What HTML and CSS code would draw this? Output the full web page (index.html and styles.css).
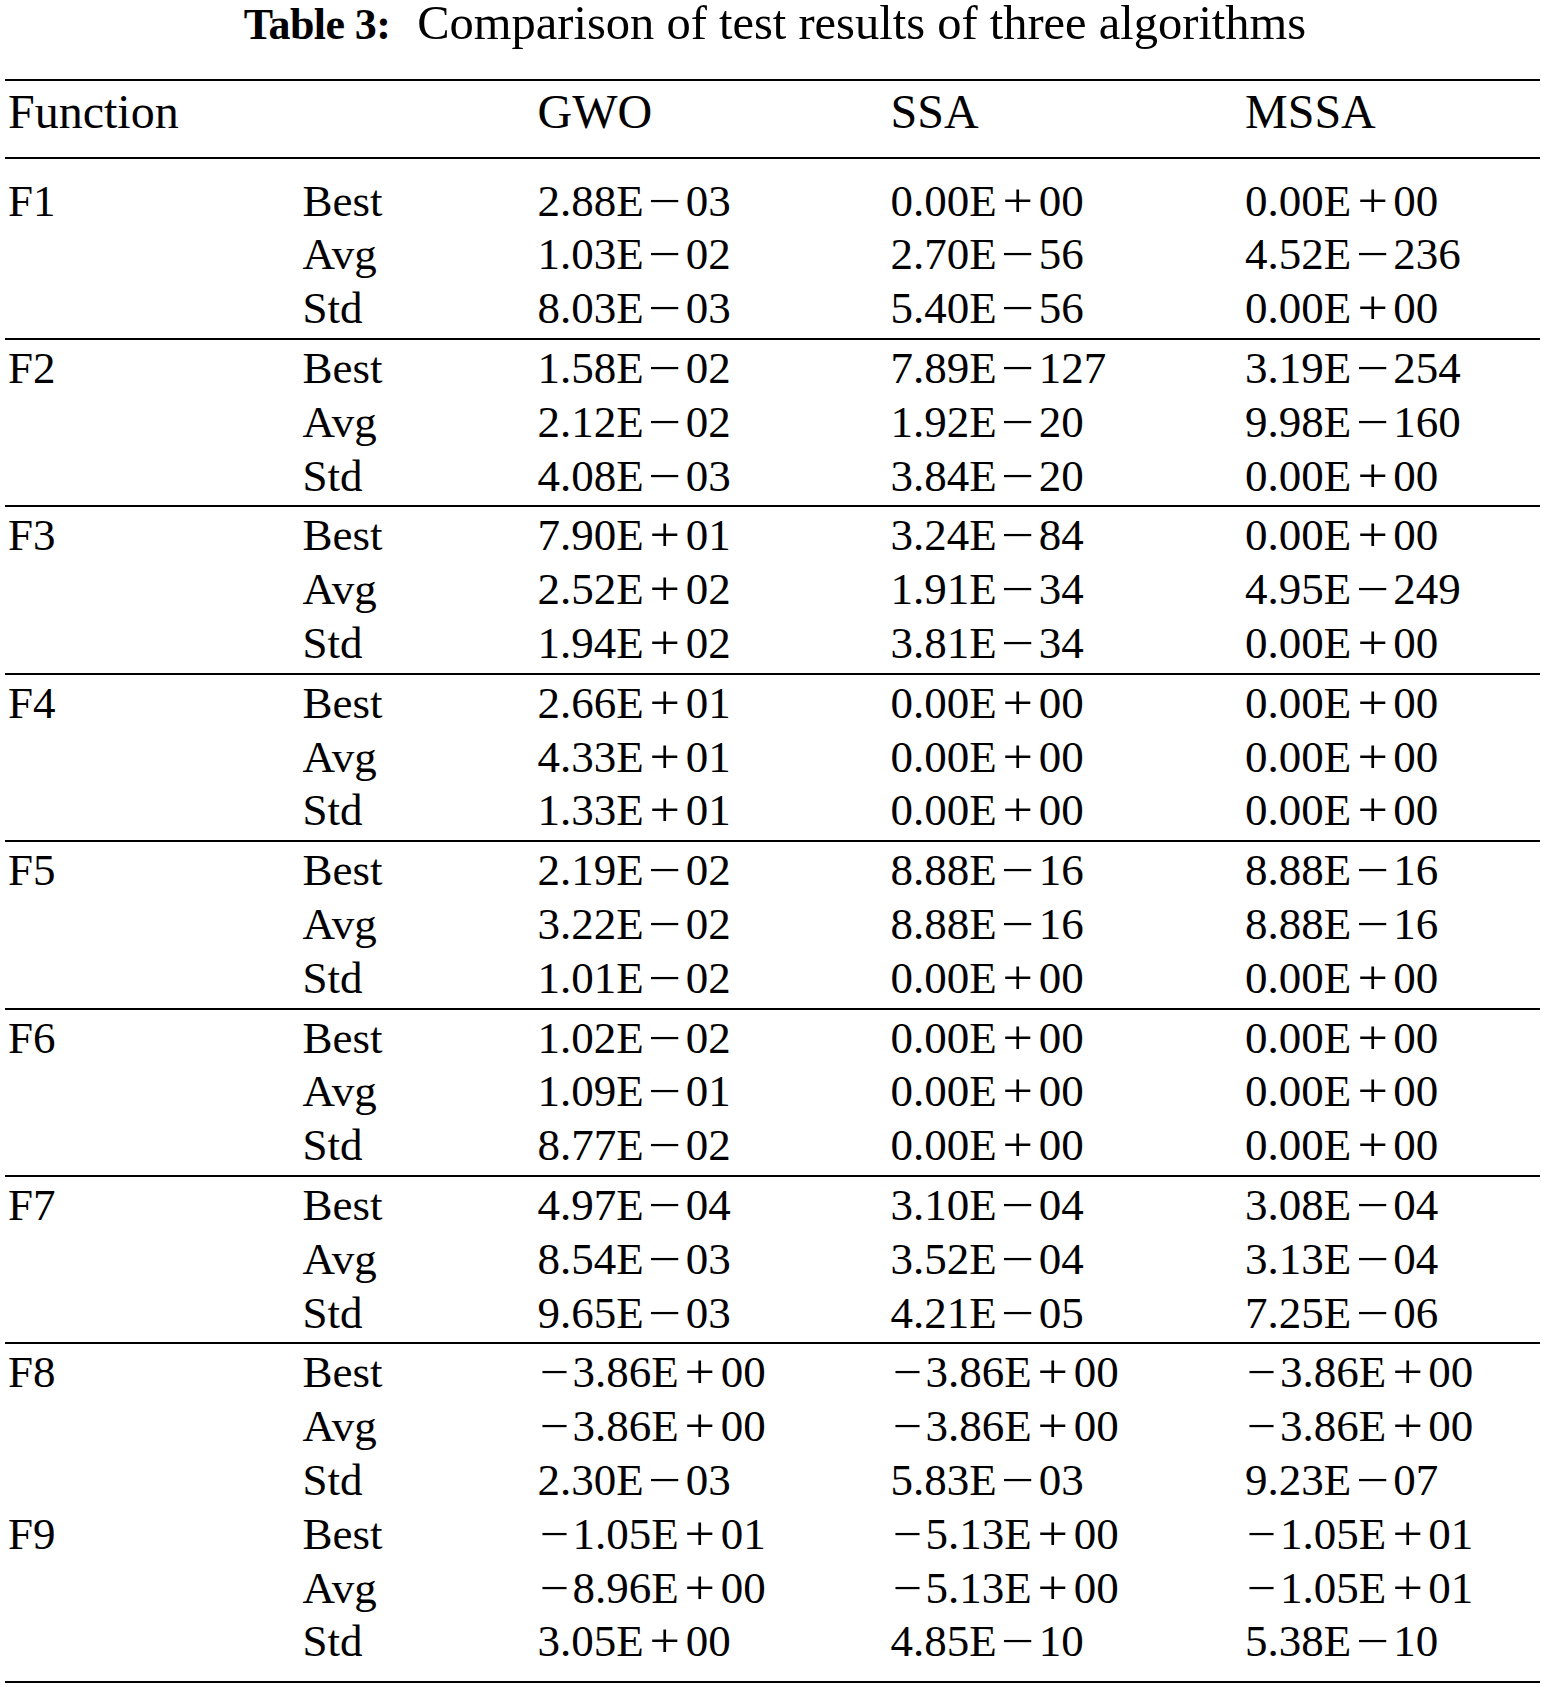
FILE: index.html
```html
<!DOCTYPE html>
<html lang="en">
<head>
<meta charset="utf-8">
<title>Table 3</title>
<link rel="stylesheet" href="styles.css">
</head>
<body>
<div class="page">
  <h1 class="caption"><span class="cap-label">Table 3:</span><span class="cap-text">Comparison of test results of three algorithms</span></h1>
  <div class="tbl">
    <div class="row head"><span>Function</span><span></span><span>GWO</span><span>SSA</span><span>MSSA</span></div>

    <div class="group first">
      <div class="row"><span>F1</span><span>Best</span><span>2.88E<span class="op mi">−</span>03</span><span>0.00E<span class="op">+</span>00</span><span>0.00E<span class="op">+</span>00</span></div>
      <div class="row"><span></span><span>Avg</span><span>1.03E<span class="op mi">−</span>02</span><span>2.70E<span class="op mi">−</span>56</span><span>4.52E<span class="op mi">−</span>236</span></div>
      <div class="row"><span></span><span>Std</span><span>8.03E<span class="op mi">−</span>03</span><span>5.40E<span class="op mi">−</span>56</span><span>0.00E<span class="op">+</span>00</span></div>
    </div>

    <div class="group">
      <div class="row"><span>F2</span><span>Best</span><span>1.58E<span class="op mi">−</span>02</span><span>7.89E<span class="op mi">−</span>127</span><span>3.19E<span class="op mi">−</span>254</span></div>
      <div class="row"><span></span><span>Avg</span><span>2.12E<span class="op mi">−</span>02</span><span>1.92E<span class="op mi">−</span>20</span><span>9.98E<span class="op mi">−</span>160</span></div>
      <div class="row"><span></span><span>Std</span><span>4.08E<span class="op mi">−</span>03</span><span>3.84E<span class="op mi">−</span>20</span><span>0.00E<span class="op">+</span>00</span></div>
    </div>

    <div class="group">
      <div class="row"><span>F3</span><span>Best</span><span>7.90E<span class="op">+</span>01</span><span>3.24E<span class="op mi">−</span>84</span><span>0.00E<span class="op">+</span>00</span></div>
      <div class="row"><span></span><span>Avg</span><span>2.52E<span class="op">+</span>02</span><span>1.91E<span class="op mi">−</span>34</span><span>4.95E<span class="op mi">−</span>249</span></div>
      <div class="row"><span></span><span>Std</span><span>1.94E<span class="op">+</span>02</span><span>3.81E<span class="op mi">−</span>34</span><span>0.00E<span class="op">+</span>00</span></div>
    </div>

    <div class="group">
      <div class="row"><span>F4</span><span>Best</span><span>2.66E<span class="op">+</span>01</span><span>0.00E<span class="op">+</span>00</span><span>0.00E<span class="op">+</span>00</span></div>
      <div class="row"><span></span><span>Avg</span><span>4.33E<span class="op">+</span>01</span><span>0.00E<span class="op">+</span>00</span><span>0.00E<span class="op">+</span>00</span></div>
      <div class="row"><span></span><span>Std</span><span>1.33E<span class="op">+</span>01</span><span>0.00E<span class="op">+</span>00</span><span>0.00E<span class="op">+</span>00</span></div>
    </div>

    <div class="group">
      <div class="row"><span>F5</span><span>Best</span><span>2.19E<span class="op mi">−</span>02</span><span>8.88E<span class="op mi">−</span>16</span><span>8.88E<span class="op mi">−</span>16</span></div>
      <div class="row"><span></span><span>Avg</span><span>3.22E<span class="op mi">−</span>02</span><span>8.88E<span class="op mi">−</span>16</span><span>8.88E<span class="op mi">−</span>16</span></div>
      <div class="row"><span></span><span>Std</span><span>1.01E<span class="op mi">−</span>02</span><span>0.00E<span class="op">+</span>00</span><span>0.00E<span class="op">+</span>00</span></div>
    </div>

    <div class="group">
      <div class="row"><span>F6</span><span>Best</span><span>1.02E<span class="op mi">−</span>02</span><span>0.00E<span class="op">+</span>00</span><span>0.00E<span class="op">+</span>00</span></div>
      <div class="row"><span></span><span>Avg</span><span>1.09E<span class="op mi">−</span>01</span><span>0.00E<span class="op">+</span>00</span><span>0.00E<span class="op">+</span>00</span></div>
      <div class="row"><span></span><span>Std</span><span>8.77E<span class="op mi">−</span>02</span><span>0.00E<span class="op">+</span>00</span><span>0.00E<span class="op">+</span>00</span></div>
    </div>

    <div class="group">
      <div class="row"><span>F7</span><span>Best</span><span>4.97E<span class="op mi">−</span>04</span><span>3.10E<span class="op mi">−</span>04</span><span>3.08E<span class="op mi">−</span>04</span></div>
      <div class="row"><span></span><span>Avg</span><span>8.54E<span class="op mi">−</span>03</span><span>3.52E<span class="op mi">−</span>04</span><span>3.13E<span class="op mi">−</span>04</span></div>
      <div class="row"><span></span><span>Std</span><span>9.65E<span class="op mi">−</span>03</span><span>4.21E<span class="op mi">−</span>05</span><span>7.25E<span class="op mi">−</span>06</span></div>
    </div>

    <div class="group last">
      <div class="row"><span>F8</span><span>Best</span><span><span class="neg">−</span>3.86E<span class="op">+</span>00</span><span><span class="neg">−</span>3.86E<span class="op">+</span>00</span><span><span class="neg">−</span>3.86E<span class="op">+</span>00</span></div>
      <div class="row"><span></span><span>Avg</span><span><span class="neg">−</span>3.86E<span class="op">+</span>00</span><span><span class="neg">−</span>3.86E<span class="op">+</span>00</span><span><span class="neg">−</span>3.86E<span class="op">+</span>00</span></div>
      <div class="row"><span></span><span>Std</span><span>2.30E<span class="op mi">−</span>03</span><span>5.83E<span class="op mi">−</span>03</span><span>9.23E<span class="op mi">−</span>07</span></div>
      <div class="row"><span>F9</span><span>Best</span><span><span class="neg">−</span>1.05E<span class="op">+</span>01</span><span><span class="neg">−</span>5.13E<span class="op">+</span>00</span><span><span class="neg">−</span>1.05E<span class="op">+</span>01</span></div>
      <div class="row"><span></span><span>Avg</span><span><span class="neg">−</span>8.96E<span class="op">+</span>00</span><span><span class="neg">−</span>5.13E<span class="op">+</span>00</span><span><span class="neg">−</span>1.05E<span class="op">+</span>01</span></div>
      <div class="row"><span></span><span>Std</span><span>3.05E<span class="op">+</span>00</span><span>4.85E<span class="op mi">−</span>10</span><span>5.38E<span class="op mi">−</span>10</span></div>
    </div>
  </div>
</div>
</body>
</html>
```

FILE: styles.css
```css
html, body {
  margin: 0;
  padding: 0;
  background: #ffffff;
}

body {
  font-family: "Liberation Serif", "Times New Roman", serif;
  color: #000000;
}

.page {
  width: 1546px;
}

.caption {
  margin: 2px 0 36px 0;
  padding-left: 4px;
  height: 41px;
  font-size: 48.5px;
  line-height: 41px;
  text-align: center;
  font-weight: normal;
  white-space: nowrap;
}

.cap-label {
  font-weight: bold;
  font-size: 44px;
  letter-spacing: -0.6px;
}

.cap-text {
  font-size: 48.5px;
  margin-left: 27px;
}

.tbl {
  margin-left: 5px;
  width: 1535px;
  border-top: 2px solid #000;
}

.row {
  display: grid;
  grid-template-columns: 294.5px 235px 353px 354.5px 1fr;
  padding-left: 3px;
  height: 53.8px;
  line-height: 53.8px;
  font-size: 45px;
  white-space: nowrap;
}

.row.head {
  font-size: 48px;
  height: 54px;
  line-height: 54px;
  padding-top: 4.1px;
  padding-bottom: 18px;
  border-bottom: 2px solid #000;
}

.group {
  padding: 2px 0;
  border-bottom: 2px solid #000;
}

.group.first {
  padding-top: 15.6px;
}

.group.last {
  padding-bottom: 11.5px;
}

.op {
  display: inline-block;
  margin: 0 8.3px;
  line-height: 0.6;
  transform: scale(1.2, 1.08);
}

.op.mi {
  transform: scaleX(1.3);
}

.neg {
  display: inline-block;
  margin: 0 7.6px 0 2px;
  line-height: 0.6;
  transform-origin: left center;
  transform: scaleX(1.15);
}
```
